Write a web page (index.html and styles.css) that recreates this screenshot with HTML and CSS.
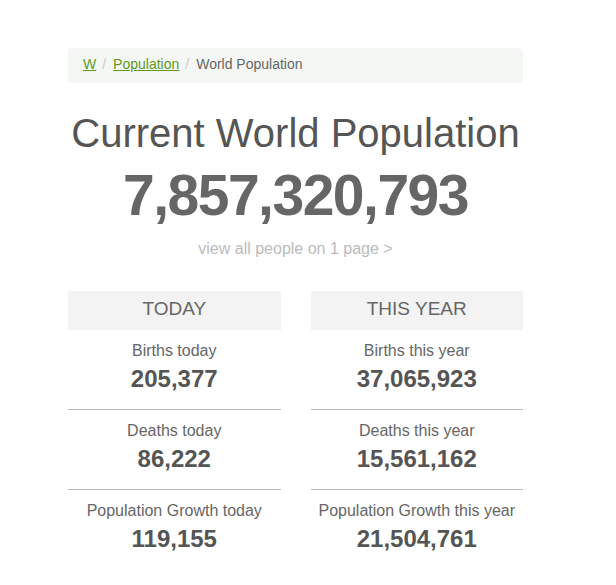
FILE: index.html
```html
<!DOCTYPE html>
<html lang="en">
<head>
    <meta charset="UTF-8">
    <meta name="viewport" content="width=device-width, initial-scale=1.0">
    <title>Current World Population</title>
    <link rel="stylesheet" href="styles.css">
</head>
<body>
    <div class="page">
        <ol class="breadcrumb">
            <li><a href="#">W</a></li>
            <li><a href="#">Population</a></li>
            <li class="current">World Population</li>
        </ol>

        <h1 class="title">Current World Population</h1>
        <div class="bigCount">7,857,320,793</div>
        <a class="allPeople" href="#">view all people on 1 page &gt;</a>

        <div class="counters">
            <div class="counterCol">
                <div class="colHead">TODAY</div>
                <div class="counterRow">
                    <div class="counterLabel">Births today</div>
                    <div class="counterNum">205,377</div>
                </div>
                <div class="counterRow">
                    <div class="counterLabel">Deaths today</div>
                    <div class="counterNum">86,222</div>
                </div>
                <div class="counterRow">
                    <div class="counterLabel">Population Growth today</div>
                    <div class="counterNum">119,155</div>
                </div>
            </div>
            <div class="counterCol">
                <div class="colHead">THIS YEAR</div>
                <div class="counterRow">
                    <div class="counterLabel">Births this year</div>
                    <div class="counterNum">37,065,923</div>
                </div>
                <div class="counterRow">
                    <div class="counterLabel">Deaths this year</div>
                    <div class="counterNum">15,561,162</div>
                </div>
                <div class="counterRow">
                    <div class="counterLabel">Population Growth this year</div>
                    <div class="counterNum">21,504,761</div>
                </div>
            </div>
        </div>
    </div>
</body>
</html>
```

FILE: styles.css
```css
body {
    margin: 0;
    background: #fff;
    font-family: "Liberation Sans", Arial, sans-serif;
    color: #666;
}

.page {
    width: 455px;
    margin-left: 68px;
    padding-top: 48px;
    text-align: center;
}

.breadcrumb {
    display: flex;
    list-style: none;
    margin: 0;
    padding: 8px 15px 10px;
    height: 17px;
    background-color: #f5f7f5;
    border-radius: 4px;
    font-size: 14px;
    line-height: 17px;
    text-align: left;
}

.breadcrumb li + li::before {
    content: "/";
    color: #ccc;
    padding: 0 7px 0 6px;
}

.breadcrumb a {
    color: #5f9a1c;
    text-decoration: underline;
}

.breadcrumb .current {
    color: #666;
}

.title {
    margin: 27px 0 0;
    font-size: 40px;
    font-weight: normal;
    line-height: 46px;
    color: #555;
}

.bigCount {
    margin-top: 6px;
    font-size: 57px;
    font-weight: bold;
    letter-spacing: -1.5px;
    line-height: 66px;
    color: #666;
}

.allPeople {
    display: block;
    margin-top: 12px;
    font-size: 16px;
    line-height: 18px;
    color: #bbb;
    text-decoration: none;
}

.counters {
    display: grid;
    grid-template-columns: 1fr 1fr;
    gap: 30px;
    margin-top: 33px;
}

.colHead {
    height: 39px;
    background-color: #f3f3f3;
    font-size: 19px;
    line-height: 36px;
    color: #666;
}

.counterRow {
    padding: 12px 0 15px;
    border-bottom: 1px solid #bbb;
}

.counterRow:last-child {
    border-bottom: none;
}

.counterLabel {
    font-size: 16px;
    line-height: 18px;
    color: #666;
}

.counterNum {
    margin-top: 3px;
    font-size: 24px;
    font-weight: bold;
    line-height: 31px;
    color: #555;
}
```
